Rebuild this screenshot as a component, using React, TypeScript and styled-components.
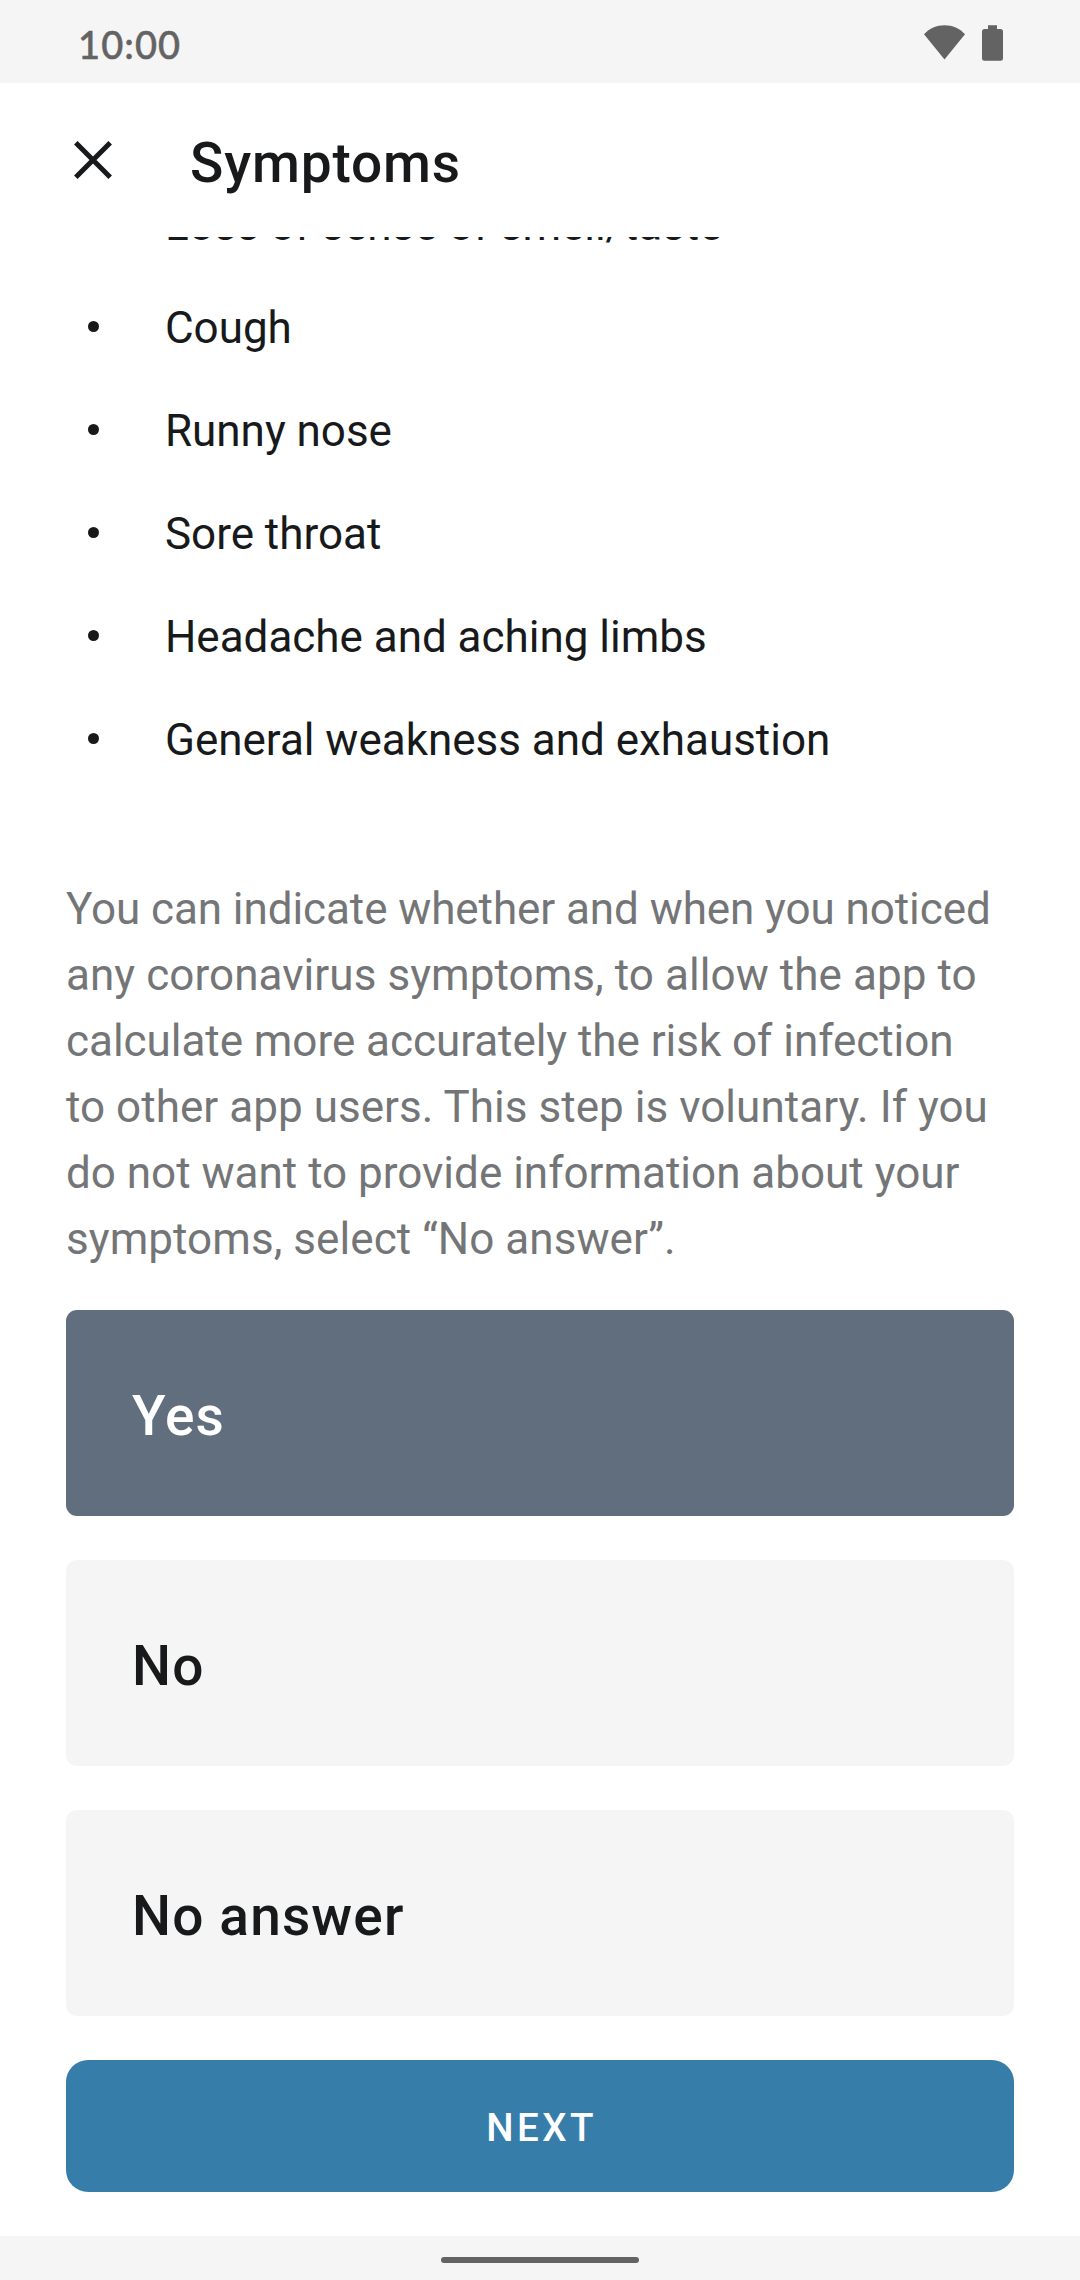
import React, { useState } from "react";
import styled, { createGlobalStyle } from "styled-components";

const color = {
  surface: "#f5f5f5",
  ink: "#17191a",
  muted: "#747577",
  system: "#636363",
  selected: "#606e7e",
  primary: "#367daa",
};

const GlobalStyle = createGlobalStyle`
  *, *::before, *::after { box-sizing: border-box; }
  body {
    margin: 0;
    background: #fff;
    font-family: Roboto, "Liberation Sans", sans-serif;
    color: ${color.ink};
  }
  button { font: inherit; color: inherit; border: 0; margin: 0; cursor: pointer; }
`;

const Screen = styled.div`
  width: 1080px;
  height: 2280px;
  display: flex;
  flex-direction: column;
  overflow: hidden;
  background: #fff;
`;

const StatusBar = styled.div`
  flex: none;
  height: 83px;
  padding: 0 77px 0 78px;
  display: flex;
  justify-content: space-between;
  background: ${color.surface};
  color: ${color.system};
`;

const Clock = styled.span`
  font-family: Lato, Roboto, sans-serif;
  font-size: 38px;
  font-weight: 500;
  line-height: 88px;
  letter-spacing: 1.1px;
  -webkit-text-stroke: 0.5px ${color.system};
`;

const StatusIcons = styled.div`
  display: flex;
  align-items: flex-start;
  gap: 17px;
  padding-top: 25px;
`;

const AppBar = styled.header`
  flex: none;
  height: 154px;
  display: flex;
  align-items: center;
  padding-left: 60px;
`;

const CloseButton = styled.button`
  width: 66px;
  height: 66px;
  padding: 0;
  display: flex;
  align-items: center;
  justify-content: center;
  background: none;
`;

const Title = styled.h1`
  margin: 6px 0 0 64px;
  font-size: 55px;
  font-weight: 500;
  line-height: 72px;
  letter-spacing: 0.85px;
`;

const Content = styled.main`
  flex: 1;
  min-height: 0;
  overflow: hidden;
  padding: 0 66px;
`;

const SymptomList = styled.ul`
  list-style: none;
  margin: -63px 0 84px;
  padding: 0;
`;

const SymptomItem = styled.li`
  display: flex;
  align-items: center;
  gap: 66px;
  height: 103px;
  padding-left: 22px;
  font-size: 44px;
  line-height: 103px;
  letter-spacing: -0.02px;
  white-space: nowrap;

  &::before {
    content: "";
    width: 11px;
    height: 11px;
    margin-bottom: 4px;
    border-radius: 50%;
    background: ${color.ink};
  }
`;

const Description = styled.p`
  margin: 0 0 38px;
  font-size: 44px;
  line-height: 66px;
  color: ${color.muted};
`;

const Line = styled.span<{ $tracking: number }>`
  display: block;
  white-space: nowrap;
  letter-spacing: ${(p) => p.$tracking}px;
`;

const Options = styled.div`
  display: flex;
  flex-direction: column;
  gap: 44px;
`;

const Option = styled.button<{ $selected: boolean }>`
  height: 206px;
  padding: 6px 66px 0;
  border-radius: 11px;
  text-align: left;
  font-size: 55px;
  font-weight: 500;
  letter-spacing: 1.15px;
  background: ${(p) => (p.$selected ? color.selected : color.surface)};
  color: ${(p) => (p.$selected ? "#fff" : color.ink)};
`;

const Footer = styled.footer`
  flex: none;
  padding: 0 66px 44px;
`;

const NextButton = styled.button`
  width: 100%;
  height: 132px;
  padding: 2px 0 0 3px;
  border-radius: 22px;
  font-size: 38.5px;
  font-weight: 500;
  letter-spacing: 3.44px;
  color: #fff;
  background: ${color.primary};
`;

const NavigationBar = styled.div`
  flex: none;
  height: 44px;
  padding-top: 21px;
  display: flex;
  justify-content: center;
  background: ${color.surface};
`;

const HomeHandle = styled.div`
  width: 198px;
  height: 6px;
  border-radius: 3px;
  background: ${color.system};
`;

const symptoms = [
  "Loss of sense of smell/taste",
  "Cough",
  "Runny nose",
  "Sore throat",
  "Headache and aching limbs",
  "General weakness and exhaustion",
];

const description = [
  { text: "You can indicate whether and when you noticed", tracking: -0.08 },
  { text: "any coronavirus symptoms, to allow the app to", tracking: 0.065 },
  { text: "calculate more accurately the risk of infection", tracking: -0.04 },
  { text: "to other app users. This step is voluntary. If you", tracking: 0.04 },
  { text: "do not want to provide information about your", tracking: 0 },
  { text: "symptoms, select “No answer”.", tracking: 0.06 },
];

const answers = ["Yes", "No", "No answer"];

export default function App() {
  const [answer, setAnswer] = useState("Yes");

  return (
    <Screen>
      <GlobalStyle />
      <StatusBar>
        <Clock>10:00</Clock>
        <StatusIcons>
          <svg width="41" height="35" viewBox="0 0 41 35" fill="currentColor">
            <path d="M20.5 34.5 0 9.3C5.5 3.4 12.5 0.3 20.5 0.3S35.5 3.4 41 9.3Z" />
          </svg>
          <svg width="21" height="36" viewBox="0 0 21 36" fill="currentColor">
            <path d="M6 0.3h9v3.7h3.5a2.5 2.5 0 0 1 2.5 2.5v26.8a2.5 2.5 0 0 1-2.5 2.5h-16a2.5 2.5 0 0 1-2.5-2.5v-26.8a2.5 2.5 0 0 1 2.5-2.5h3.5z" />
          </svg>
        </StatusIcons>
      </StatusBar>
      <AppBar>
        <CloseButton aria-label="Close">
          <svg width="38" height="38" viewBox="0 0 38 38" fill="none" stroke={color.ink} strokeWidth="5">
            <path d="M1.8 1.8 36.2 36.2M36.2 1.8 1.8 36.2" />
          </svg>
        </CloseButton>
        <Title>Symptoms</Title>
      </AppBar>
      <Content>
        <SymptomList>
          {symptoms.map((s) => (
            <SymptomItem key={s}>{s}</SymptomItem>
          ))}
        </SymptomList>
        <Description>
          {description.map((line) => (
            <Line key={line.text} $tracking={line.tracking}>
              {line.text}
            </Line>
          ))}
        </Description>
        <Options>
          {answers.map((a) => (
            <Option key={a} $selected={a === answer} onClick={() => setAnswer(a)}>
              {a}
            </Option>
          ))}
        </Options>
      </Content>
      <Footer>
        <NextButton>NEXT</NextButton>
      </Footer>
      <NavigationBar>
        <HomeHandle />
      </NavigationBar>
    </Screen>
  );
}
